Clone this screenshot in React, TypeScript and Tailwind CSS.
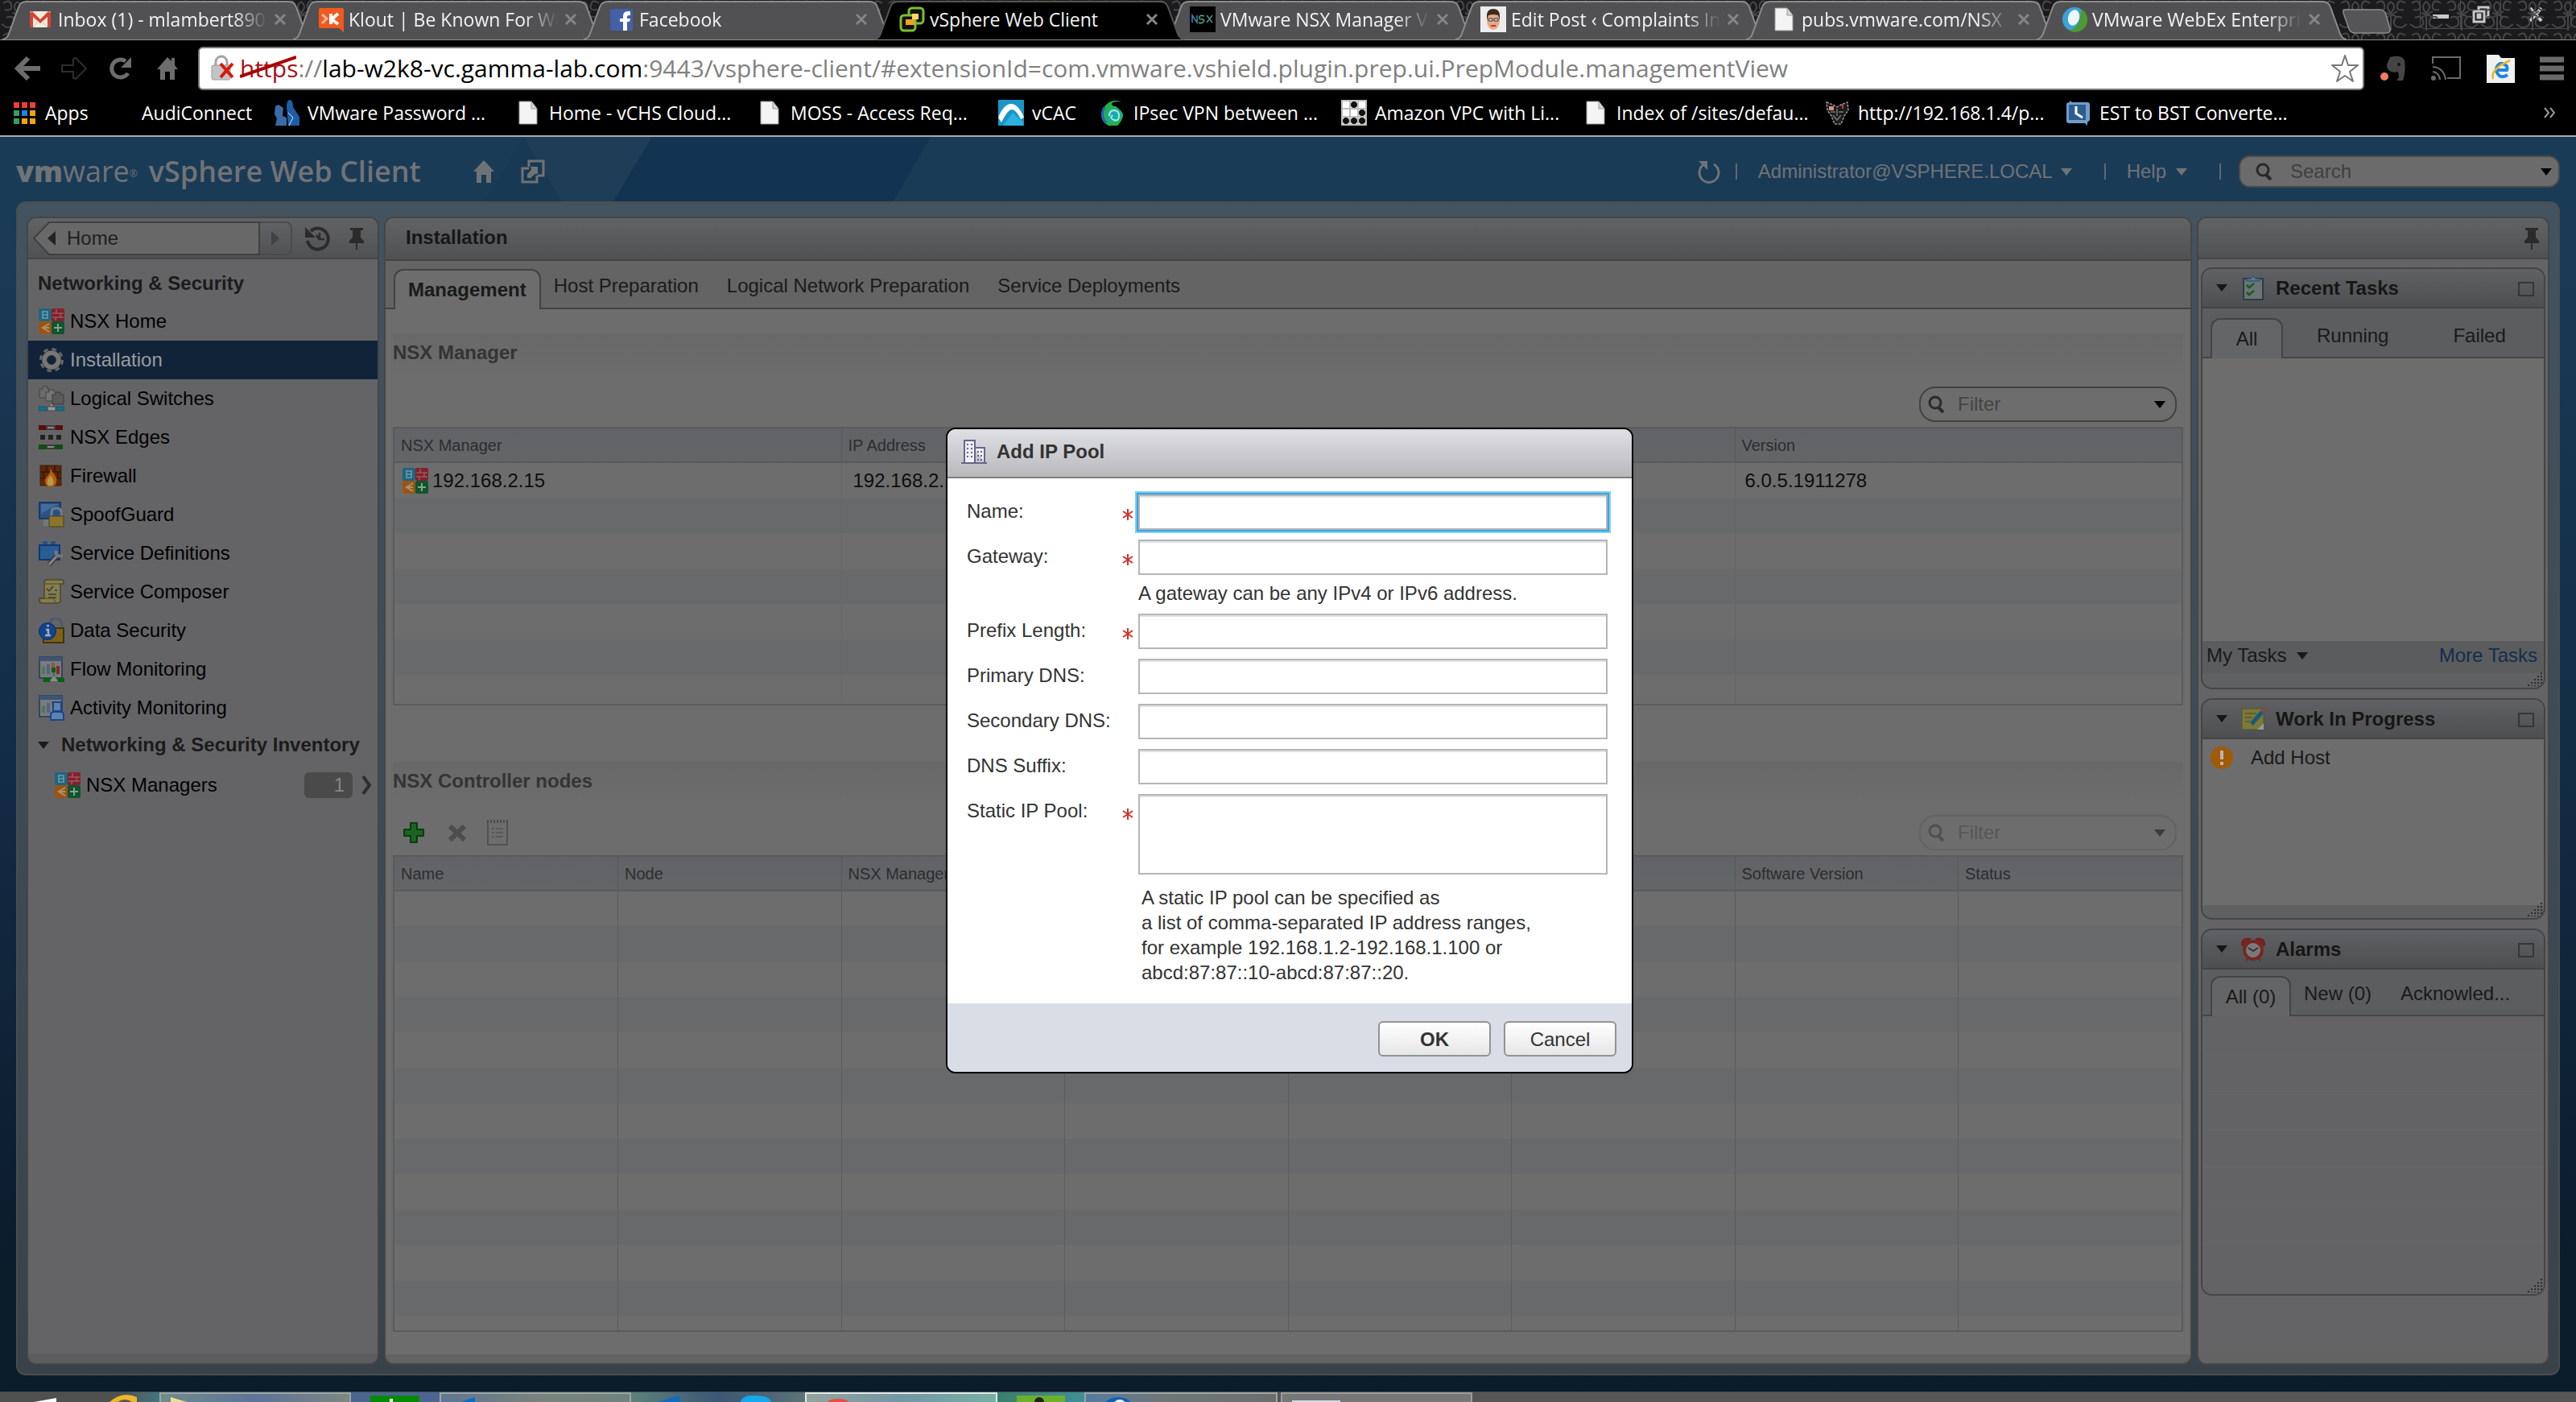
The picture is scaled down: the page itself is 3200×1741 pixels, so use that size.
import { useState, type ReactNode } from 'react'
import clsx from 'clsx'

/* ---------- browser chrome ---------- */

const Page = () => (
  <svg viewBox="0 0 32 32" className="size-8 shrink-0">
    <path d="M5 2h15l7 9v19H5z" fill="#f4f4f4" stroke="#9a9a9a" />
    <path d="M20 2v9h7" fill="#d5d5d5" stroke="#9a9a9a" />
  </svg>
)

const GmailIcon = () => (
  <svg viewBox="0 0 32 32" className="size-8 shrink-0">
    <rect x="3" y="6" width="26" height="20" rx="2" fill="#efece0" />
    <path d="M3 8v18h4V13l9 8 9-8v13h4V8l-3-2-10 10L6 6z" fill="#d94236" />
    <path d="M7 26l7-8M25 26l-7-8" stroke="#c9c4b0" />
  </svg>
)

const KloutIcon = () => (
  <svg viewBox="0 0 32 32" className="size-8 shrink-0">
    <path d="M3 2h27q2 0 2 2v28l-6-5H3q-2 0-2-2V4q0-2 2-2z" fill="#f2591f" />
    <path d="M5 10l6 5-6 6" stroke="#ffb490" strokeWidth="3" fill="none" />
    <path d="M16 9v13M25 9l-8 7 8 6" stroke="#fff" strokeWidth="4" fill="none" />
  </svg>
)

const FacebookIcon = () => (
  <svg viewBox="0 0 32 32" className="size-8 shrink-0">
    <rect x="2" y="3" width="28" height="27" rx="2" fill="#4360a8" />
    <path d="M18 30V19h-4v-4h4v-3q0-6 6-6h3v5h-2q-2 0-2 2v2h4l-1 4h-3v11z" fill="#fff" />
  </svg>
)

const VsphereIcon = () => (
  <svg viewBox="0 0 32 32" className="size-8 shrink-0">
    <rect x="12" y="2" width="18" height="19" rx="4" fill="#111" stroke="#7ac02f" strokeWidth="3" />
    <rect x="2" y="11" width="18" height="19" rx="4" fill="#111" stroke="#7ac02f" strokeWidth="3" />
    <path d="M16 9h8v7h-5v7H8v-7h8z" fill="#f2a21c" />
    <path d="M16 9h8v7h-8z" fill="#ffd76a" />
  </svg>
)

const NsxFavicon = () => (
  <svg viewBox="0 0 32 32" className="size-8 shrink-0">
    <rect width="32" height="32" fill="#000" />
    <path d="M3 20v-9l6 9v-9" stroke="#3f86b8" strokeWidth="1.5" fill="none" />
    <path d="M18 12q-5-2-6 1t3 3 2 3-6 1" stroke="#57a878" strokeWidth="1.5" fill="none" />
    <path d="M21 11l7 9M28 11l-7 9" stroke="#3f9a8f" strokeWidth="1.5" />
  </svg>
)

const FaceIcon = () => (
  <svg viewBox="0 0 32 32" className="size-8 shrink-0">
    <rect width="32" height="32" fill="#ececec" />
    <ellipse cx="16" cy="18" rx="8" ry="11" fill="#e8a888" />
    <path d="M8 17V10Q9 3 16 3t8 7v7l-2-6q-6-2-12 0z" fill="#3e2c1e" />
    <path d="M10 15h5v3h-5zM17 15h5v3h-5z" fill="#d8d8d8" stroke="#333" />
    <path d="M13 24h6" stroke="#c0392b" strokeWidth="2" />
  </svg>
)

const WebexIcon = () => (
  <svg viewBox="0 0 32 32" className="size-8 shrink-0">
    <circle cx="16" cy="16" r="15" fill="#3aa3d8" />
    <path d="M24 3a15 15 0 0 1-14 27q14-5 14-27z" fill="#4c9a34" />
    <path d="M28 7a15 15 0 0 1-18 23q16-6 18-23z" fill="#4c9a34" />
    <ellipse cx="15" cy="14" rx="7" ry="10" fill="#eef6fa" transform="rotate(15 15 14)" />
  </svg>
)

const TABS = [
  { title: 'Inbox (1) - mlambert890', icon: <GmailIcon /> },
  { title: 'Klout | Be Known For Wl', icon: <KloutIcon /> },
  { title: 'Facebook', icon: <FacebookIcon /> },
  { title: 'vSphere Web Client', icon: <VsphereIcon />, active: true },
  { title: 'VMware NSX Manager V', icon: <NsxFavicon /> },
  { title: 'Edit Post ‹ Complaints In', icon: <FaceIcon /> },
  { title: 'pubs.vmware.com/NSX', icon: <Page /> },
  { title: 'VMware WebEx Enterpri', icon: <WebexIcon /> },
]

function BrowserTab({ title, icon, active }: { title: string; icon: ReactNode; active?: boolean }) {
  return (
    <div className={clsx('relative -mr-6 flex h-12 w-[385px] shrink items-center pr-8 pl-[31px]', active && 'z-10')}>
      <svg viewBox="0 0 385 50" preserveAspectRatio="none" className="absolute inset-0 h-[50px] w-full">
        <path
          d="M0 49Q6 48 8 42L20 9Q22 2 30 2H355Q363 2 365 9L377 42Q379 48 385 49"
          fill={active ? '#000' : '#515153'}
          stroke={active ? '#555' : '#8c8c8c'}
          strokeWidth="2"
        />
      </svg>
      <button type="button" className="relative flex min-w-0 flex-1 items-center gap-1.5 text-[#f2f2f2]">
        {icon}
        <span
          className={clsx(
            'min-w-0 flex-1 overflow-hidden text-left text-[23px] leading-8 whitespace-nowrap',
            !active && '[mask-image:linear-gradient(to_right,#000_84%,transparent)]',
          )}
        >
          {title}
        </span>
      </button>
      <button type="button" aria-label="Close tab" className="relative ml-2 shrink-0">
        <svg viewBox="0 0 16 16" className="size-4">
          <path d="M2 2l12 12M14 2L2 14" stroke="#858585" strokeWidth="3" />
        </svg>
      </button>
    </div>
  )
}

function WindowButtons() {
  return (
    <div className="mr-1.5 ml-auto flex h-9 rounded-b-md border-x border-b border-[#4a4a4c] text-[#c8c8c8]">
      <button type="button" aria-label="Minimize" className="flex w-[50px] items-center justify-center border-r border-[#4a4a4c]">
        <svg viewBox="0 0 20 20" className="size-5"><path d="M0 10h20v5H0z" fill="currentColor" /></svg>
      </button>
      <button type="button" aria-label="Restore" className="flex w-[50px] items-center justify-center border-r border-[#4a4a4c]">
        <svg viewBox="0 0 22 22" className="size-[22px]">
          <path d="M8 5V2h12v12h-3M2 7h13v13H2zM7 11h3v4H7z" fill="none" stroke="currentColor" strokeWidth="3" />
        </svg>
      </button>
      <button type="button" aria-label="Close" className="flex w-[86px] items-center justify-center">
        <svg viewBox="0 0 18 18" className="size-[18px]"><path d="M2 1l14 16M16 1L2 17" stroke="currentColor" strokeWidth="4" /></svg>
      </button>
    </div>
  )
}

function TabStrip() {
  return (
    <div className="relative flex h-[50px] overflow-hidden bg-[#1b1b1d] pl-[3px]">
      <svg className="absolute inset-0 size-full" aria-hidden="true">
        <pattern id="damask" width="44" height="40" patternUnits="userSpaceOnUse">
          <path
            d="M4 4q8-6 10 2t-8 6M22 2q8 6 0 14q-8-8 0-14M40 4q-8-6-10 2t8 6M8 22q8-4 10 4t-10 8M36 22q-8-4-10 4t10 8M22 20v18M2 30l6 4M42 30l-6 4M16 16l12 4M30 14l-14 8"
            stroke="#464648"
            strokeWidth="2"
            fill="none"
          />
        </pattern>
        <rect width="100%" height="100%" fill="url(#damask)" />
      </svg>
      <div className="relative flex min-w-0 pr-6">
        {TABS.map(t => <BrowserTab key={t.title} {...t} />)}
      </div>
      <button type="button" aria-label="New tab" className="relative -ml-1.5 h-11 w-[62px] shrink-0">
        <svg viewBox="0 0 62 44" className="h-11 w-[62px]">
          <path d="M5 12H46Q53 12 55 18L60 36Q61 41 55 41H17Q11 41 9 36L2 16Q1 12 5 12z" fill="#555557" stroke="#8c8c8c" strokeWidth="1.5" />
        </svg>
      </button>
      <WindowButtons />
      <div className="absolute inset-x-0 bottom-0 h-px bg-[#8c8c8c]" />
    </div>
  )
}

function Toolbar() {
  return (
    <div className="flex h-[68px] items-center bg-black pt-px pr-3.5 pl-[18px]">
      <div className="flex w-[228px] items-center gap-[26px] text-[#6d6d6d]">
        <button type="button" aria-label="Back">
          <svg viewBox="0 0 32 32" className="size-8"><path d="M17 3L4 16l13 13M5 16h27" fill="none" stroke="currentColor" strokeWidth="6" /></svg>
        </button>
        <button type="button" aria-label="Forward">
          <svg viewBox="0 0 32 32" className="size-8"><path d="M1 12h14V4l3-1 13 13-13 13-3-1v-8H1z" fill="none" stroke="#2d2d2d" strokeWidth="2" /></svg>
        </button>
        <button type="button" aria-label="Reload">
          <svg viewBox="0 0 32 32" className="size-8"><path d="M25 22A11 11 0 1 1 22 7" fill="none" stroke="currentColor" strokeWidth="5" /><path d="M29 2v13H16z" fill="currentColor" /></svg>
        </button>
        <button type="button" aria-label="Home">
          <svg viewBox="0 0 32 32" className="size-8"><path d="M16 2L3 17h4v13h6V20h6v10h6V17h4l-4-5V3h-4v4z" fill="currentColor" /></svg>
        </button>
      </div>
      <div className="flex h-[54px] min-w-0 flex-1 items-center rounded-md border-2 border-[#777] bg-white pr-1 pl-3.5">
        <svg viewBox="0 0 30 34" className="mr-1.5 h-[34px] w-[30px] shrink-0">
          <path d="M6 14V9a7 7 0 0 1 14 0v5" fill="none" stroke="#a5a5a5" strokeWidth="3" />
          <rect x="1" y="13" width="23" height="18" rx="2" fill="#c4c4c4" stroke="#999" />
          <path d="M12 11l15 17M27 11L12 28" stroke="#d8170f" strokeWidth="4" />
        </svg>
        <div
          role="textbox"
          aria-label="Address"
          contentEditable
          suppressContentEditableWarning
          className="min-w-0 flex-1 overflow-hidden text-[30px] leading-10 whitespace-nowrap text-[#808080]"
        >
          <span className="relative text-[#a3121a]">
            https
            <svg viewBox="0 0 70 30" className="absolute top-1 left-0 h-[30px] w-[70px]"><path d="M0 27L70 3" stroke="#a60000" strokeWidth="4" /></svg>
          </span>
          ://<span className="text-black">lab-w2k8-vc.gamma-lab.com</span>
          :9443/vsphere-client/#extensionId=com.vmware.vshield.plugin.prep.ui.PrepModule.managementView
        </div>
        <button type="button" aria-label="Bookmark this page">
          <svg viewBox="0 0 36 36" className="size-9"><path d="M18 2l4 12h12l-10 8 4 12-10-7-10 7 4-12L2 14h12z" fill="#fff" stroke="#777" strokeWidth="2" strokeLinejoin="round" /></svg>
        </button>
      </div>
      <div className="ml-[18px] flex items-center gap-[29px]">
        <svg viewBox="0 0 36 36" className="size-9">
          <path d="M14 4q14-4 18 4 2 14-2 25h-8l3-4-1-7-5 1q-10-2-9-10z" fill="#454545" />
          <circle cx="25" cy="13" r="2" fill="#111" />
          <circle cx="7" cy="28" r="5" fill="#f07a62" />
        </svg>
        <svg viewBox="0 0 38 32" className="h-8 w-[38px]">
          <path d="M2 10V2h34v26H20M2 14q14 1 16 16M2 20q8 1 9 10" fill="none" stroke="#6a6a6a" strokeWidth="2" />
          <circle cx="3" cy="28" r="3" fill="#6a6a6a" />
        </svg>
        <svg viewBox="0 0 38 38" className="size-[38px]">
          <path d="M2 2h15l3 4h17v31H2z" fill="#f1f1f1" />
          <path d="M28 27q-8 5-12-1t0-11 11 1q1 3 0 5H15" fill="none" stroke="#1f86dd" strokeWidth="4" />
          <path d="M10 32Q6 20 31 9" fill="none" stroke="#f0b51c" strokeWidth="2.500" />
        </svg>
        <button type="button" aria-label="Menu">
          <svg viewBox="0 0 32 32" className="size-8"><path d="M1 5h30M1 16h30M1 27h30" stroke="#6a6a6a" strokeWidth="7" /></svg>
        </button>
      </div>
    </div>
  )
}

const AppsIcon = () => (
  <svg viewBox="0 0 32 32" className="size-8 shrink-0">
    <path d="M3 3h7v7H3zM13 3h7v7h-7zM23 3h7v7h-7z" fill="#ea4335" />
    <path d="M3 13h7v7H3zM3 23h7v7H3z" fill="#34a060" />
    <path d="M13 13h7v7h-7z" fill="#1a84f0" />
    <path d="M23 13h7v7h-7zM13 23h7v7h-7zM23 23h7v7h-7z" fill="#f5a30c" />
  </svg>
)

const PeopleIcon = () => (
  <svg viewBox="0 0 32 32" className="size-8 shrink-0">
    <path d="M16 9q0-9 4-9t4 9l8 12v11H18z" fill="#1c5ea8" />
    <path d="M2 8l4-2 6 4-1 10 5 2v10H2l2-9-3-5z" fill="#3a6ba8" />
    <path d="M18 16l6 6-5 10" stroke="#dce8f5" fill="none" />
  </svg>
)

const VcacIcon = () => (
  <svg viewBox="0 0 32 32" className="size-8 shrink-0">
    <rect width="32" height="32" fill="#1896c8" />
    <path d="M0 22Q7 5 16 5t16 17l-4 2Q22 12 17 12T4 28z" fill="#fff" />
    <path d="M6 32l12-16 13 12v4z" fill="#2cb1e0" />
  </svg>
)

const ShellIcon = () => (
  <svg viewBox="0 0 32 32" className="size-8 shrink-0">
    <path d="M27 2Q12-2 5 10t3 20 16 0 5-12-9-10q-5 0-5-3t12-3z" fill="#22b24a" />
    <circle cx="18" cy="19" r="9" fill="#19a7b8" />
    <path d="M12 20q0-7 6-7t6 7-6 5-2-6" fill="none" stroke="#a6f0c0" strokeWidth="2" />
    <path d="M6 9q-6 10 2 20" stroke="#2460c0" strokeWidth="3" fill="none" />
  </svg>
)

const MosaicIcon = () => (
  <svg viewBox="0 0 32 32" className="size-8 shrink-0">
    <rect width="32" height="32" fill="#bdbdbd" />
    <path d="M2 2h8v8H2zM22 2h8v8h-8zM2 12h8v8H2zM12 12h8v8h-8z" fill="#fff" />
    <path d="M12 2h8v8h-8zM22 12h8v8h-8zM2 22h8v8H2zM12 22h8v8h-8zM22 22h8v8h-8z" fill="#fff" />
    <g fill="#111">
      <circle cx="16" cy="6" r="4" /><circle cx="26" cy="16" r="4" /><circle cx="6" cy="26" r="4" />
      <circle cx="16" cy="26" r="4" /><circle cx="26" cy="26" r="4" />
    </g>
  </svg>
)

const WolfIcon = () => (
  <svg viewBox="0 0 32 32" className="size-8 shrink-0">
    <path d="M3 3l8 3 5 3 5-3 8-3 1 10-5 7-4 10h-8l-4-10-5-7z" fill="#1c1c1c" stroke="#9a9a9a" strokeDasharray="3 1.5" strokeWidth="1.5" />
    <path d="M6 8h6v5H6z" fill="#e08a85" /><path d="M23 5v6" stroke="#c33" strokeWidth="2" />
    <path d="M8 15h6M18 15h6M11 19l5 6 5-6M16 11v9" fill="none" stroke="#777" strokeWidth="1.5" />
  </svg>
)

const ClockIcon = () => (
  <svg viewBox="0 0 32 32" className="size-8 shrink-0">
    <path d="M5 1l3 2h19q3 0 3 3v19l-3 3v4l-3-3H4q-3 0-3-3V6q0-3 4-3z" fill="#6f9dcc" />
    <rect x="4" y="6" width="21" height="19" fill="#2c5c90" />
    <path d="M13 8v9l8 5" fill="none" stroke="#fff" strokeWidth="3" />
  </svg>
)

const BOOKMARKS = [
  { label: 'Apps', icon: <AppsIcon />, width: 'w-[120px]' },
  { label: 'AudiConnect', icon: <span className="size-8 shrink-0" />, width: 'w-[206px]' },
  { label: 'VMware Password ...', icon: <PeopleIcon />, width: 'w-[300px]' },
  { label: 'Home - vCHS Cloud...', icon: <Page />, width: 'w-[300px]' },
  { label: 'MOSS - Access Req...', icon: <Page />, width: 'w-[300px]' },
  { label: 'vCAC', icon: <VcacIcon />, width: 'w-[126px]' },
  { label: 'IPsec VPN between ...', icon: <ShellIcon />, width: 'w-[300px]' },
  { label: 'Amazon VPC with Li...', icon: <MosaicIcon />, width: 'w-[300px]' },
  { label: 'Index of /sites/defau...', icon: <Page />, width: 'w-[300px]' },
  { label: 'http://192.168.1.4/p...', icon: <WolfIcon />, width: 'w-[300px]' },
  { label: 'EST to BST Converte...', icon: <ClockIcon />, width: 'w-[300px]' },
]

function BookmarksBar() {
  return (
    <div className="flex h-[52px] items-center border-b-2 border-[#a9a9a9] bg-black pb-1.5 pl-3.5 text-[23px] leading-8 text-white">
      {BOOKMARKS.map(b => (
        <a key={b.label} href="#" className={clsx('flex shrink-0 items-center gap-2.5 whitespace-nowrap', b.width)}>
          {b.icon}
          {b.label}
        </a>
      ))}
      <button type="button" aria-label="More bookmarks" className="mr-[26px] ml-auto">
        <svg viewBox="0 0 14 14" className="size-3.5"><path d="M1 1l5 6-5 6M8 1l5 6-5 6" fill="none" stroke="#999" strokeWidth="2" /></svg>
      </button>
    </div>
  )
}

/* ---------- shared bits ---------- */

const Caret = ({ className }: { className?: string }) => (
  <svg viewBox="0 0 14 9" className={clsx('h-[9px] w-3.5 shrink-0', className)}>
    <path d="M0 0h14L7 9z" fill="currentColor" />
  </svg>
)

const Magnifier = () => (
  <svg viewBox="0 0 24 24" className="size-6 shrink-0">
    <circle cx="10" cy="10" r="7" fill="none" stroke="currentColor" strokeWidth="3" />
    <path d="M14 16l6 6" stroke="currentColor" strokeWidth="4" />
  </svg>
)

const Pin = () => (
  <svg viewBox="0 0 20 28" className="h-7 w-5">
    <path d="M2 1h16v3h-3v9l4 4v3H1v-3l4-4V4H2zM9 20h2v8H9z" fill="#2b2b2b" />
  </svg>
)

const NsxIcon = () => (
  <svg viewBox="0 0 32 32" className="size-8 shrink-0">
    <rect width="16" height="16" rx="2" fill="#1f6680" />
    <rect x="16" width="16" height="16" rx="2" fill="#85202a" />
    <rect y="16" width="16" height="16" rx="2" fill="#9a5514" />
    <rect x="16" y="16" width="16" height="16" rx="2" fill="#0e5530" />
    <path d="M5 3v10M5 4h7M5 8h7M5 12h7M11 4v8" stroke="#6f9aaa" strokeWidth="1.5" fill="none" />
    <path d="M17 6h14M17 11h14M22 1v5M27 6v5M21 11v4" stroke="#945c60" strokeWidth="1.500" />
    <path d="M13 19l-8 5 8 5M4 24h9" stroke="#ae9166" strokeWidth="2" fill="none" />
    <path d="M24 19v10M19 24h10" stroke="#85a28e" strokeWidth="2" />
  </svg>
)

/* ---------- navigator ---------- */

const GearIcon = () => (
  <svg viewBox="0 0 32 32" className="size-8 shrink-0">
    <circle cx="16" cy="16" r="12" fill="none" stroke="#6a6a6a" strokeWidth="6" strokeDasharray="5 4.425" />
    <circle cx="16" cy="16" r="12" fill="none" stroke="#3a3a3a" strokeWidth="1" />
    <circle cx="16" cy="16" r="8.500" fill="none" stroke="#777" strokeWidth="6" />
    <circle cx="16" cy="16" r="5.500" fill="none" stroke="#2d2d2d" />
  </svg>
)

const SwitchesIcon = () => (
  <svg viewBox="0 0 32 32" className="size-8 shrink-0">
    <path d="M1 4h4V1h6v3h2v11H1z" fill="#6b6b6b" stroke="#444" />
    <path d="M9 8h4V5h6v3h2v11H9z" fill="#757575" stroke="#444" />
    <path d="M17 11h4V8h6v3h4v12H17z" fill="#5a5a5a" stroke="#3c3c3c" />
    <path d="M0 26h10v5H0zM22 26h10v5H22z" fill="#1a6d86" stroke="#16566a" />
    <path d="M16 23v4" stroke="#999" strokeWidth="2" />
    <rect x="11" y="26" width="10" height="5" fill="#999" stroke="#444" />
  </svg>
)

const EdgesIcon = () => (
  <svg viewBox="0 0 32 32" className="size-8 shrink-0">
    <path d="M0 1h30v6H0z" fill="#5a0d0d" /><path d="M9 1h12v6H9z" fill="#3c3c3c" /><path d="M11 3h8v2h-8z" fill="#888" />
    <path d="M2 13h6v6H2zM12 13h6v6h-6zM22 13h6v6h-6z" fill="#222" />
    <path d="M0 25h30v6H0z" fill="#0b500f" /><path d="M9 25h12v6H9z" fill="#3c3c3c" /><path d="M11 27h8v2h-8z" fill="#888" />
  </svg>
)

const FirewallIcon = () => (
  <svg viewBox="0 0 32 32" className="size-8 shrink-0">
    <rect x="2" y="3" width="26" height="25" fill="#5f2609" stroke="#42200c" />
    <path d="M2 11h26M2 19h26M10 3v8M20 3v8M6 11v8M24 11v8" stroke="#3d1a08" strokeWidth="2" />
    <path d="M14 5q2 5 6 10t1 12q-6 5-12 0-3-6 2-11t3-11z" fill="#b55e08" />
    <path d="M15 15q6 8 2 13h-5q-4-5 3-13z" fill="#b59b4c" />
  </svg>
)

const SpoofIcon = () => (
  <svg viewBox="0 0 32 32" className="size-8 shrink-0">
    <rect x="1" y="1" width="26" height="20" fill="#2a5283" stroke="#173966" strokeWidth="2" />
    <path d="M3 3h22L3 15z" fill="#416b9b" />
    <rect x="6" y="22" width="8" height="8" fill="#777" />
    <path d="M16 19v-6q0-5 6-5t6 5v6" fill="none" stroke="#6f7d8c" strokeWidth="3" />
    <rect x="13" y="18" width="18" height="13" fill="#8b742b" stroke="#4d4014" />
  </svg>
)

const ServiceDefIcon = () => (
  <svg viewBox="0 0 32 32" className="size-8 shrink-0">
    <path d="M5 1h6v6H5zM15 1h6v6h-6z" fill="#25518a" />
    <rect x="1" y="6" width="25" height="18" fill="#275c95" stroke="#12386a" strokeWidth="2" />
    <path d="M13 30l11-12" stroke="#3b3b3b" strokeWidth="6" /><path d="M13 30l11-12" stroke="#858585" strokeWidth="3" />
    <path d="M22 13q-2 8 8 6" fill="none" stroke="#777" strokeWidth="4" />
  </svg>
)

const ScrollIcon = () => (
  <svg viewBox="0 0 32 32" className="size-8 shrink-0">
    <path d="M9 1h20q3 1 2 5h-4v22q-2 2-5 2H4q-4-1-3-6h6V5q0-3 2-4z" fill="#857d52" stroke="#4f4723" strokeWidth="1.5" />
    <path d="M8 6h19M1 24h18q1 5 3 6" stroke="#4f4723" fill="none" />
    <path d="M10 12l3 3 5-6M12 19h10M12 23h10M20 14h3" stroke="#3e3a26" fill="none" strokeWidth="1.5" />
  </svg>
)

const DataIcon = () => (
  <svg viewBox="0 0 32 32" className="size-8 shrink-0">
    <path d="M14 14V8q0-7 7-7t8 7v6" fill="none" stroke="#4e5a68" strokeWidth="3" />
    <rect x="6" y="13" width="25" height="18" fill="#7f621a" stroke="#42340c" strokeWidth="2" />
    <circle cx="11" cy="17" r="10.500" fill="#0f4592" stroke="#0a2c60" />
    <path d="M9 15h3v7M8 22h7M10 10h3" stroke="#aaa" strokeWidth="2.500" fill="none" />
  </svg>
)

const ChartBase = () => (
  <>
    <rect x="1" y="1" width="28" height="26" fill="#777b80" stroke="#34465c" strokeWidth="2" />
    <path d="M1 1h28v5H1z" fill="#3d5573" />
    <path d="M4 13h4v9H4z" fill="#4d7a52" /><path d="M10 10h4v12h-4z" fill="#5a5f86" /><path d="M16 8h4v6h-4z" fill="#8f5a2a" />
  </>
)

const FlowIcon = () => (
  <svg viewBox="0 0 32 32" className="size-8 shrink-0">
    <ChartBase />
    <path d="M22 12h4v10h-4z" fill="#7d2d2d" /><path d="M16 14h5v6h-5z" fill="#0a5f14" />
    <path d="M19 20v8M6 27h8v5H6zM24 27h8v5h-8z" fill="#0a5f14" stroke="#0a5f14" />
    <path d="M14 31l4-6h2l4 6z" fill="#8a8a8a" />
  </svg>
)

const ActivityIcon = () => (
  <svg viewBox="0 0 32 32" className="size-8 shrink-0">
    <ChartBase />
    <path d="M18 9h10v11H18z" fill="#5b84ad" stroke="#1a458c" strokeWidth="2" />
    <path d="M15 31v-6q0-4 4-4h8q4 0 4 4v6z" fill="#5b84ad" stroke="#1a458c" strokeWidth="2" />
  </svg>
)

const NAV = [
  { label: 'NSX Home', icon: <NsxIcon /> },
  { label: 'Installation', icon: <GearIcon /> },
  { label: 'Logical Switches', icon: <SwitchesIcon /> },
  { label: 'NSX Edges', icon: <EdgesIcon /> },
  { label: 'Firewall', icon: <FirewallIcon /> },
  { label: 'SpoofGuard', icon: <SpoofIcon /> },
  { label: 'Service Definitions', icon: <ServiceDefIcon /> },
  { label: 'Service Composer', icon: <ScrollIcon /> },
  { label: 'Data Security', icon: <DataIcon /> },
  { label: 'Flow Monitoring', icon: <FlowIcon /> },
  { label: 'Activity Monitoring', icon: <ActivityIcon /> },
]

function Navigator() {
  const [current, setCurrent] = useState('Installation')

  return (
    <nav className="flex w-[438px] shrink-0 flex-col overflow-hidden rounded-xl border-2 border-[#464646] bg-[#646466] text-[24px] leading-8">
      <div className="flex h-[51px] shrink-0 items-center border-b-2 border-[#464646] bg-linear-to-b from-[#626365] to-[#505153] pl-1.5">
        <button type="button" className="relative flex h-[42px] w-[282px] items-center gap-[14px] pl-[18px] text-[#1f1f1f]">
          <svg viewBox="0 0 282 42" preserveAspectRatio="none" className="absolute inset-0 size-full">
            <path d="M281 1H20L1 21l19 20H281z" fill="#686868" stroke="#404040" strokeWidth="2" />
          </svg>
          <svg viewBox="0 0 10 18" className="relative h-[18px] w-2.5"><path d="M10 0v18L0 9z" fill="#222" /></svg>
          <span className="relative">Home</span>
        </button>
        <button type="button" aria-label="Forward" className="flex h-[42px] w-10 items-center justify-center rounded-r-lg border-2 border-l-0 border-[#4b4b4c]">
          <svg viewBox="0 0 10 18" className="h-[18px] w-2.5"><path d="M0 0v18l10-9z" fill="#414142" /></svg>
        </button>
        <button type="button" aria-label="History" className="ml-4">
          <svg viewBox="0 0 32 32" className="size-8">
            <path d="M7 7a13 13 0 1 1-4 12" fill="none" stroke="#2b2b2b" strokeWidth="4" />
            <path d="M0 2v13h13z" fill="#2b2b2b" /><path d="M18 9v8h6M14 12l4 6" fill="none" stroke="#2b2b2b" strokeWidth="2.500" />
          </svg>
        </button>
        <button type="button" aria-label="Pin" className="ml-[22px]"><Pin /></button>
      </div>

      <h2 className="px-3 pt-[14px] pb-[7px] font-bold text-[#1b1b1b]">Networking &amp; Security</h2>
      <ul>
        {NAV.map(n => (
          <li key={n.label}>
            <a
              href="#"
              onClick={() => setCurrent(n.label)}
              className={clsx(
                'flex h-12 items-center gap-[7px] pl-[13px]',
                current === n.label ? 'bg-[#112339] text-[#9a9da0]' : 'text-black',
              )}
            >
              {n.icon}
              {n.label}
            </a>
          </li>
        ))}
      </ul>
      <h2 className="flex items-center gap-[15px] px-3 pt-1.5 font-bold whitespace-nowrap text-[#1b1b1b]">
        <Caret />
        Networking &amp; Security Inventory
      </h2>
      <a href="#" className="mt-2.5 flex h-12 items-center gap-[7px] pr-1.5 pl-[33px] text-black">
        <NsxIcon />
        NSX Managers
        <span className="ml-auto h-8 w-[60px] rounded-md bg-[#4a4a4b] pr-2.5 text-right text-[#858585]">1</span>
        <svg viewBox="0 0 14 24" className="ml-1 h-6 w-3.5"><path d="M2 1l8 11-8 11" fill="none" stroke="#2e2e2e" strokeWidth="4" /></svg>
      </a>
      <div className="mt-auto h-3 bg-[#5d5d5f]" />
    </nav>
  )
}

/* ---------- main area ---------- */

function Filter({ disabled }: { disabled?: boolean }) {
  return (
    <label
      className={clsx(
        'ml-auto flex h-[44px] w-[320px] items-center rounded-[20px] border-2 pr-3 pl-2',
        disabled ? 'border-[#636363] text-[#505050]' : 'border-[#434343] text-[#2b2b2b]',
      )}
    >
      <Magnifier />
      <input
        aria-label="Filter"
        placeholder="Filter"
        disabled={disabled}
        className={clsx(
          'ml-3.5 min-w-0 flex-1 bg-transparent text-[24px] leading-8 outline-none',
          disabled ? 'placeholder:text-[#575757]' : 'placeholder:text-[#444]',
        )}
      />
      <Caret className={disabled ? 'text-[#3c3c3c]' : 'text-black'} />
    </label>
  )
}

function Grid({ columns, rows, lines }: { columns: string[]; rows: ReactNode[][]; lines: string }) {
  return (
    <table className="w-full table-fixed border-collapse">
      <thead>
        <tr className="h-[42px] border-b-2 border-[#5a5b5c] bg-linear-to-b from-[#616366] to-[#646567]">
          {columns.map((c, i) => (
            <th key={i} className="border-l border-[#56585a] px-2 py-0 text-left text-[20px] leading-6 font-normal text-[#2c2d2e] first:border-l-0">
              {c}
            </th>
          ))}
        </tr>
      </thead>
      <tbody>
        {rows.map((r, i) => (
          <tr key={i} className="h-11 odd:bg-[#6d6d6d] even:bg-[#67696b]">
            {columns.map((_, j) => (
              <td key={j} className={clsx('p-0 text-[24px] leading-8 whitespace-nowrap text-[#0d0d0d] first:border-l-0', lines)}>
                {r[j]}
              </td>
            ))}
          </tr>
        ))}
      </tbody>
    </table>
  )
}

const BLANK: ReactNode[][] = Array.from({ length: 12 }, () => [])

const MANAGERS: ReactNode[][] = [
  [
    <span className="flex items-center gap-[5px] pl-2.5"><NsxIcon />192.168.2.15</span>,
    <span className="pl-3.5">192.168.2.15</span>,
    '',
    <span className="pl-3">6.0.5.1911278</span>,
  ],
  ...BLANK.slice(0, 6),
]

const MAIN_TABS = ['Host Preparation', 'Logical Network Preparation', 'Service Deployments']

function MainPanel() {
  return (
    <main className="flex min-w-0 flex-1 flex-col overflow-hidden rounded-xl border-2 border-[#464646] bg-[#6d6d6d] text-[24px] leading-8">
      <h1 className="h-[53px] shrink-0 border-b-2 border-[#434343] bg-linear-to-b from-[#626365] to-[#505153] px-[25px] pt-2 font-bold text-[#171717]">
        Installation
      </h1>
      <div className="flex h-[60px] shrink-0 items-end bg-[#646464] text-[#1a1a1a]">
        <span className="w-2.5 self-stretch border-b-2 border-[#424242]" />
        <button type="button" className="h-[50px] rounded-t-xl border-2 border-b-0 border-[#424242] bg-[#6d6d6d] px-4 font-bold">
          Management
        </button>
        <div className="flex flex-1 gap-[35px] self-stretch border-b-2 border-[#424242] pl-4">
          {MAIN_TABS.map(t => <button key={t} type="button" className="pt-1">{t}</button>)}
        </div>
      </div>

      <div className="flex min-h-0 flex-1 flex-col px-[9px] pt-[30px] pb-7">
        <h2 className="bg-linear-to-b from-[#686868] to-[#6d6d6d] pt-2 pb-3 font-bold text-[#343434]">NSX Manager</h2>
        <div className="flex pt-[14px] pr-2 pb-1.5"><Filter /></div>
        <div className="h-[346px] shrink-0 overflow-hidden border-2 border-[#5b5b5b]">
          <Grid columns={['NSX Manager', 'IP Address', '', 'Version']} rows={MANAGERS} lines="border-l border-[#646566]" />
        </div>

        <h2 className="mt-[70px] bg-linear-to-b from-[#686868] to-[#6d6d6d] pt-2 pb-3 font-bold text-[#343434]">NSX Controller nodes</h2>
        <div className="flex items-center gap-7 pt-[14px] pr-2 pb-1.5 pl-3">
          <button type="button" aria-label="Add controller">
            <svg viewBox="0 0 28 28" className="size-7"><path d="M10 2h8v8h8v8h-8v8h-8v-8H2v-8h8z" fill="#1b6420" stroke="#083d0e" strokeWidth="2" strokeLinejoin="round" /></svg>
          </button>
          <button type="button" aria-label="Delete controller">
            <svg viewBox="0 0 24 24" className="size-6"><path d="M3 4l18 17M21 4L3 21" stroke="#4d4d4d" strokeWidth="6" /></svg>
          </button>
          <button type="button" aria-label="View log" className="-ml-1">
            <svg viewBox="0 0 28 34" className="h-[34px] w-7">
              <path d="M2 5v27h24V5" fill="none" stroke="#525252" strokeWidth="2" />
              <path d="M1 3h26" stroke="#4c4c4c" strokeWidth="4" strokeDasharray="2 2" />
              <path d="M7 12h3M7 17h3M7 22h3M12 12h9M12 17h9M12 22h9" stroke="#595959" strokeWidth="2" />
            </svg>
          </button>
          <Filter disabled />
        </div>
        <div className="min-h-0 flex-1 overflow-hidden border-2 border-[#5b5b5b]">
          <Grid
            columns={['Name', 'Node', 'NSX Manager', '', '', '', 'Software Version', 'Status']}
            rows={[...BLANK, []]}
            lines="border-l border-[#595b5c]"
          />
        </div>
      </div>
      <div className="h-[11px] shrink-0 bg-[#636363]" />
    </main>
  )
}

/* ---------- right column ---------- */

const TasksIcon = () => (
  <svg viewBox="0 0 32 32" className="size-8">
    <rect x="4" y="4" width="24" height="26" fill="#6c7476" stroke="#2f3d42" strokeWidth="2" />
    <path d="M8 7h16V4h-5l-3-3-3 3H8z" fill="#4f7d94" stroke="#2b4a5c" />
    <path d="M8 12l3 3 6-5M8 21l3 3 6-5" fill="none" stroke="#175c1e" strokeWidth="2.500" />
  </svg>
)

const NoteIcon = () => (
  <svg viewBox="0 0 32 32" className="size-8">
    <rect x="2" y="3" width="27" height="26" fill="#7c7838" stroke="#555230" />
    <path d="M6 9h14M6 14h8M6 19h6" stroke="#625f2d" strokeWidth="2" />
    <path d="M14 22l13-15" stroke="#155a80" strokeWidth="5" /><path d="M27 7l4-4" stroke="#7d4a4a" strokeWidth="5" />
    <path d="M29 21v8h-8z" fill="#999" />
  </svg>
)

const AlarmIcon = () => (
  <svg viewBox="0 0 32 32" className="size-8">
    <path d="M2 10Q2 1 12 3L5 12zM30 10Q30 1 20 3l7 9zM7 30l4-5M25 30l-4-5" fill="#7a2422" stroke="#6b2422" strokeWidth="2" />
    <circle cx="16" cy="17" r="11" fill="#7a7a7a" stroke="#762825" strokeWidth="4" />
    <path d="M10 14l6 4 6-4" fill="none" stroke="#333" strokeWidth="2" />
  </svg>
)

const Grip = () => (
  <svg viewBox="0 0 18 18" className="absolute right-0.5 bottom-0.5 size-[18px]">
    <path d="M17 1v17M13 5v13M9 9v9M5 13v5M1 16v2" stroke="#2c2c2c" strokeWidth="2" strokeDasharray="2 2" />
  </svg>
)

function Portlet({ title, icon, className, children }: { title: string; icon: ReactNode; className: string; children: ReactNode }) {
  return (
    <section className={clsx('relative flex shrink-0 flex-col overflow-hidden rounded-[14px] border-2 border-[#454547] bg-[#606163]', className)}>
      <h2 className="flex h-[49px] shrink-0 items-center border-b-2 border-[#434345] bg-linear-to-b from-[#606164] to-[#4e4f50] pr-3 pl-[17px] font-bold text-[#161616]">
        <Caret />
        <span className="mr-3 ml-4">{icon}</span>
        {title}
        <button type="button" aria-label={`Maximize ${title}`} className="mt-0.5 ml-auto h-[18px] w-5 border-2 border-[#363637]" />
      </h2>
      {children}
      <Grip />
    </section>
  )
}

function RightPanel() {
  return (
    <aside className="flex w-[438px] shrink-0 flex-col overflow-hidden rounded-xl border-2 border-[#464646] bg-[#646466] text-[24px] leading-8 text-[#191919]">
      <div className="flex h-[51px] shrink-0 items-center justify-end border-b-2 border-[#464646] bg-linear-to-b from-[#626365] to-[#505153] pr-2.5">
        <button type="button" aria-label="Pin"><Pin /></button>
      </div>
      <div className="flex flex-col gap-[11px] px-[3px] pt-2.5">
        <Portlet title="Recent Tasks" icon={<TasksIcon />} className="h-[524px]">
          <div className="flex h-[62px] shrink-0 items-end border-b-2 border-[#454547] bg-[#5c5d5f] pl-2.5">
            <button type="button" className="-mb-0.5 h-[50px] w-[90px] rounded-t-xl border-2 border-b-0 border-[#424344] bg-[#646567]">All</button>
            <button type="button" className="mb-2.5 ml-[42px]">Running</button>
            <button type="button" className="mb-2.5 ml-20">Failed</button>
          </div>
          <div className="flex-1 bg-[#6d6d6d]" />
          <div className="mb-[18px] flex h-10 items-center bg-[#5b5c5e] pr-2 pb-1 pl-[5px]">
            <button type="button" className="flex items-center gap-3">My Tasks <Caret /></button>
            <a href="#" className="ml-auto text-[#132d4c]">More Tasks</a>
          </div>
        </Portlet>

        <Portlet title="Work In Progress" icon={<NoteIcon />} className="h-[275px]">
          <div className="mb-4 flex-1 bg-[#6d6d6d] px-2.5 pt-[7px]">
            <a href="#" className="flex items-center gap-[22px]">
              <svg viewBox="0 0 28 28" className="size-7">
                <circle cx="14" cy="14" r="14" fill="#a15a05" />
                <path d="M12 5h4v11h-4zM12 19h4v4h-4z" fill="#b5b5b5" />
              </svg>
              Add Host
            </a>
          </div>
        </Portlet>

        <Portlet title="Alarms" icon={<AlarmIcon />} className="h-[456px]">
          <div className="flex h-[58px] shrink-0 items-end border-b-2 border-[#454547] bg-[#5c5d5f] pl-2.5">
            <button type="button" className="-mb-0.5 h-[50px] w-[100px] rounded-t-xl border-2 border-b-0 border-[#424344] bg-[#646567]">All (0)</button>
            <button type="button" className="mb-2.5 ml-4">New (0)</button>
            <button type="button" className="mb-2.5 ml-9">Acknowled...</button>
          </div>
          <div className="flex-1 bg-[#636365]">
            {Array.from({ length: 6 }, (_, i) => <div key={i} className="h-[47px] border-b border-[#676769]" />)}
          </div>
        </Portlet>
      </div>
      <div className="mt-auto h-3 bg-[#636364]" />
    </aside>
  )
}

/* ---------- app header ---------- */

function AppHeader() {
  return (
    <header className="relative flex h-[80px] shrink-0 items-center pt-1.5 pr-5 pl-5 text-[24px] leading-8 text-[#707376]">
      <svg viewBox="0 0 1200 100" className="absolute top-0 left-0 h-[100px] w-[1200px]" aria-hidden="true">
        <path d="M650 0H810L750 100H710z" fill="#1d3e56" />
        <path d="M650 0L590 100H710z" fill="#183953" />
        <path d="M810 0H1156L1098 100H750z" fill="#123352" />
      </svg>
      <div className="relative flex items-baseline font-['Open_Sans',sans-serif] text-[36px] leading-[44px]">
        <span className="font-extrabold">vm</span>
        <span className="font-medium">ware</span>
        <sup className="text-[12px]">®</sup>
        <span className="ml-3.5 font-semibold">vSphere Web Client</span>
      </div>
      <button type="button" aria-label="Home" className="relative ml-16">
        <svg viewBox="0 0 28 30" className="h-[30px] w-7"><path d="M14 1L1 15h4v14h6V19h6v10h6V15h4z" fill="currentColor" /></svg>
      </button>
      <button type="button" aria-label="Open in new window" className="relative ml-8">
        <svg viewBox="0 0 30 30" className="size-[30px]">
          <path d="M10 9V2h18v18h-7M10 11H2v17h18v-8" fill="none" stroke="currentColor" strokeWidth="3" />
          <path d="M12 9h9v9h-3l-6 5H8v-5l5-5z" fill="currentColor" />
        </svg>
      </button>

      <div className="relative ml-auto flex items-center">
        <button type="button" aria-label="Refresh">
          <svg viewBox="0 0 30 30" className="size-[30px]">
            <path d="M21 6a12 12 0 1 1-12 0" fill="none" stroke="currentColor" strokeWidth="3" />
            <path d="M2 2h11v11z" fill="currentColor" />
          </svg>
        </button>
        <span className="ml-[18px] h-5 w-0.5 bg-[#61686f]" />
        <button type="button" className="ml-[26px] flex items-center gap-2.5">Administrator@VSPHERE.LOCAL <Caret /></button>
        <span className="ml-10 h-5 w-0.5 bg-[#61686f]" />
        <button type="button" className="ml-[26px] flex items-center gap-3">Help <Caret /></button>
        <span className="ml-10 h-5 w-0.5 bg-[#61686f]" />
        <label className="ml-[22px] flex h-10 w-[399px] items-center rounded-[14px] border-2 border-[#4a4a4a] bg-[#6b6b6b] pr-2 pl-[18px] text-[#2a2a2a]">
          <Magnifier />
          <input aria-label="Search" placeholder="Search" className="ml-5 min-w-0 flex-1 bg-transparent outline-none placeholder:text-[#3f3f3f]" />
          <Caret className="text-black" />
        </label>
      </div>
    </header>
  )
}

/* ---------- dialog ---------- */

const FIELDS = [
  { id: 'name', label: 'Name:', required: true },
  { id: 'gateway', label: 'Gateway:', required: true, hint: 'A gateway can be any IPv4 or IPv6 address.' },
  { id: 'prefix', label: 'Prefix Length:', required: true },
  { id: 'dns1', label: 'Primary DNS:' },
  { id: 'dns2', label: 'Secondary DNS:' },
  { id: 'suffix', label: 'DNS Suffix:' },
]

const Asterisk = () => (
  <svg viewBox="0 0 14 14" className="mt-[18px] size-3.5 shrink-0">
    <path d="M7 0v14M1 3l12 8M13 3L1 11" stroke="#d0342c" strokeWidth="2" />
  </svg>
)

function AddIpPoolDialog() {
  return (
    <div
      role="dialog"
      aria-labelledby="dialog-title"
      className="absolute top-[531px] left-1/2 z-20 w-[854px] -translate-x-[425px] overflow-hidden rounded-xl border-2 border-black bg-white text-[24px] leading-[31px] text-[#333]"
    >
      <h2 id="dialog-title" className="flex h-[61px] items-center gap-3 border-b-2 border-[#808080] bg-linear-to-b from-[#dfe0e4] to-[#b9b9bd] pb-1 pl-[17px] font-bold">
        <svg viewBox="0 0 32 32" className="size-8">
          <path d="M4 30V2h13v28M17 11h12v19M0 30h32" fill="#f0f0f6" stroke="#68658e" strokeWidth="2" />
          <path d="M8 6v20M13 6v20" stroke="#68658e" strokeWidth="2" strokeDasharray="2 3" />
          <path d="M21 15v12M25 15v12" stroke="#68658e" strokeWidth="2" strokeDasharray="2 3" />
        </svg>
        Add IP Pool
      </h2>
      <form className="flex flex-col gap-3 pt-5 pr-[30px] pb-[23px] pl-6">
        {FIELDS.map(f => (
          <div key={f.id} className="flex items-start">
            <label htmlFor={f.id} className="w-[193px] pt-[5px]">{f.label}</label>
            <span className="w-5">{f.required && <Asterisk />}</span>
            <div className="flex-1">
              <input
                id={f.id}
                className={clsx(
                  'block h-11 w-full border-2 border-[#b4b6b9] bg-white px-2 outline-none',
                  f.id === 'name'
                    ? 'shadow-[inset_0_2px_0_#e2e2e2,0_0_0_2px_#33a8e0,0_0_0_4px_#8acdee]'
                    : 'shadow-[inset_0_2px_0_#e2e2e2]',
                )}
              />
              {f.hint && <p className="-mb-0.5 pt-[7px]">{f.hint}</p>}
            </div>
          </div>
        ))}
        <div className="flex items-start">
          <label htmlFor="pool" className="w-[193px] pt-[5px]">Static IP Pool:</label>
          <span className="w-5"><Asterisk /></span>
          <div className="flex-1">
            <textarea id="pool" className="block h-[100px] w-full resize-none border-2 border-[#b4b6b9] bg-white px-2 shadow-[inset_0_2px_0_#e2e2e2] outline-none" />
            <p className="pt-[13px] pl-1">
              A static IP pool can be specified as
              <br />
              a list of comma-separated IP address ranges,
              <br />
              for example 192.168.1.2-192.168.1.100 or
              <br />
              abcd:87:87::10-abcd:87:87::20.
            </p>
          </div>
        </div>
      </form>
      <div className="flex h-[85px] items-start justify-end gap-4 bg-[#d9dde5] pt-[22px] pr-[19px]">
        <button type="button" className="h-11 w-[140px] rounded-md border-2 border-[#939393] bg-linear-to-b from-white to-[#e6e6e6] font-bold">OK</button>
        <button type="button" className="h-11 w-[140px] rounded-md border-2 border-[#939393] bg-linear-to-b from-white to-[#e6e6e6]">Cancel</button>
      </div>
    </div>
  )
}

/* ---------- taskbar ---------- */

function TaskButton({ label, className, children }: { label: string; className: string; children?: ReactNode }) {
  return (
    <button type="button" aria-label={label} className={clsx('flex h-full shrink-0 items-start border-2 border-b-0 pl-3 pt-1', className)}>
      {children}
    </button>
  )
}

function Taskbar() {
  return (
    <footer className="flex h-[13px] shrink-0 overflow-hidden border-t border-[#4a4a4a] bg-[#565656]">
      <div className="flex w-[198px] shrink-0 items-end justify-end bg-linear-to-r from-[#4f5050] from-75% to-[#3f7680]">
        <svg viewBox="0 0 160 12" className="h-3 w-40">
          <path d="M4 12L32 7v5z" fill="#fff" />
          <path d="M98 12q16-14 34-6v6h-6q-8-6-18 0z" fill="#eeb62a" />
        </svg>
      </div>
      <TaskButton label="Explorer" className="w-[238px] border-[#9aa5a5] bg-linear-to-r from-[#6f8c8c] via-[#5d7397] to-[#7d8682]">
        <svg viewBox="0 0 40 12" className="h-3 w-10"><path d="M0 0l40 12H0z" fill="#f2dc8e" /></svg>
      </TaskButton>
      <div className="flex w-[110px] shrink-0 items-end bg-[#4c6590] pl-6">
        <svg viewBox="0 0 61 8" className="h-2 w-[61px]"><path d="M0 0h61v8H0z" fill="#068a06" /><path d="M26 4v4" stroke="#fff" strokeWidth="4" /></svg>
      </div>
      <TaskButton label="Outlook" className="w-[238px] border-[#9aa5a5] bg-linear-to-r from-[#5f7694] via-[#78827c] to-[#6f837e]">
        <svg viewBox="0 0 36 12" className="h-3 w-9"><path d="M6 8L30 0v12H0z" fill="#0a6cc4" /></svg>
      </TaskButton>
      <div className="flex w-[216px] shrink-0 items-end bg-linear-to-r from-[#5c827a] via-[#3c5676] to-[#5b7276] pl-7">
        <svg viewBox="0 0 160 8" className="h-2 w-40"><path d="M6 8L32 0v8z" fill="#0a6cc4" /><path d="M108 8q2-9 18-8 18 0 20 8z" fill="#15a8ea" /></svg>
      </div>
      <TaskButton label="Chrome" className="w-[239px] border-[#dfe8e6] bg-linear-to-r from-[#93a49e] via-[#7396a4] to-[#76b0a4]">
        <svg viewBox="0 0 50 12" className="h-3 w-[50px]"><path d="M10 12Q12 2 27 2t17 10z" fill="#e5503c" /></svg>
      </TaskButton>
      <div className="flex w-[108px] shrink-0 items-end bg-linear-to-r from-[#3a7f6c] to-[#3f8f96] pl-6">
        <svg viewBox="0 0 60 8" className="h-2 w-[60px]"><path d="M0 0h60v8H0z" fill="#6cb02c" /><circle cx="28" cy="8" r="6" fill="#222" /></svg>
      </div>
      <TaskButton label="VMware" className="w-[240px] border-[#9aa5a5] bg-linear-to-r from-[#547ba0] via-[#6f7676] via-40% to-[#6c6e6e]">
        <svg viewBox="0 0 60 12" className="h-3 w-[60px]"><path d="M8 12Q14 0 28 0t20 12z" fill="#0c62b4" /><circle cx="30" cy="11" r="8" fill="#fff" /></svg>
      </TaskButton>
      <TaskButton label="Notepad" className="ml-1 w-[238px] border-[#9c9c9c] bg-[#777]">
        <svg viewBox="0 0 60 8" className="mt-1 h-2 w-[60px]"><path d="M0 0h60v8H0z" fill="#d5dbe8" /></svg>
      </TaskButton>
    </footer>
  )
}

export default function App() {
  return (
    <div className="relative flex h-screen flex-col overflow-hidden font-['Liberation_Sans',Arial,sans-serif]">
      <div className="shrink-0 font-['Open_Sans','Segoe_UI',sans-serif]">
        <TabStrip />
        <Toolbar />
        <BookmarksBar />
      </div>
      <div className="flex min-h-0 flex-1 flex-col bg-linear-to-b from-[#1a3b56] from-5% via-[#122c45] via-50% to-[#0b1c2b] to-90% pb-5">
        <AppHeader />
        <div className="relative mx-5 flex min-h-0 flex-1 gap-1.5 rounded-xl border-2 border-[#4b4d4e] bg-linear-to-b from-[#43535f] to-[#3a4249] px-[11px] pt-[17px] pb-[11px]">
          <Navigator />
          <MainPanel />
          <RightPanel />
        </div>
      </div>
      <Taskbar />
      <AddIpPoolDialog />
    </div>
  )
}
